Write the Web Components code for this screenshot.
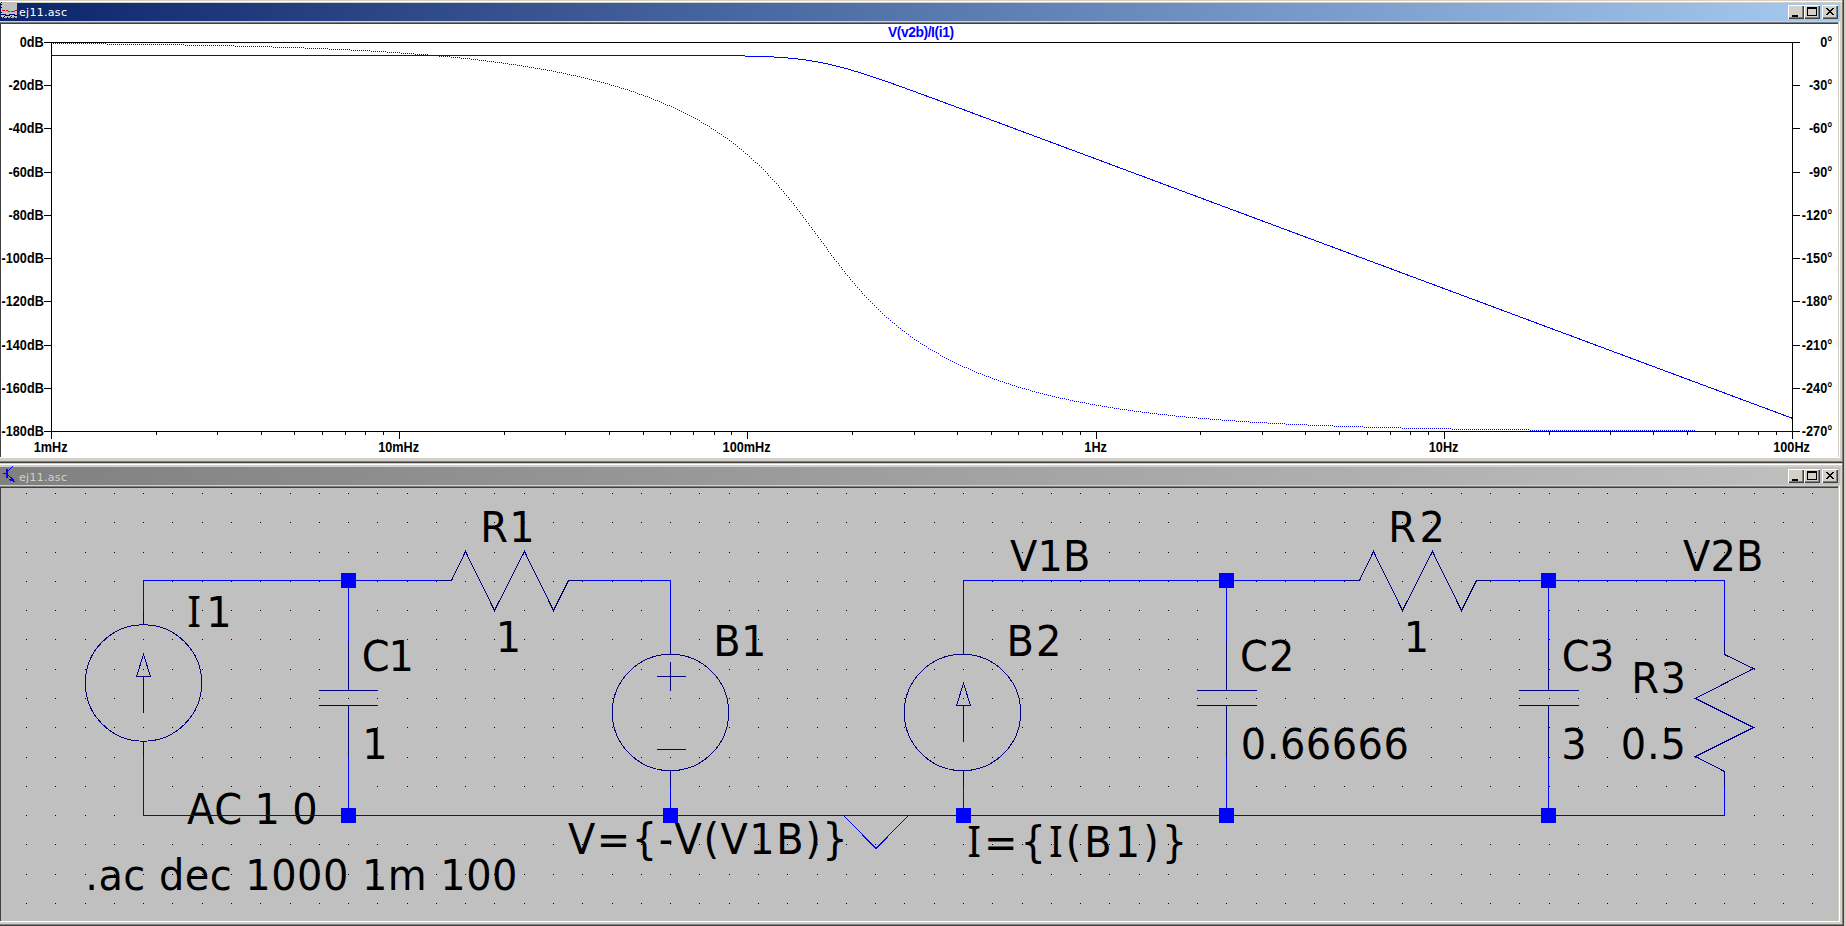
<!DOCTYPE html>
<html lang="en">
<head>
<meta charset="utf-8">
<title>ej11.asc</title>
<style>
html,body{margin:0;height:100%;overflow:hidden;background:#d4d0c8}
</style>
</head>
<body>
<mdi-desktop>
  <mdi-window caption="ej11.asc" active>
    <wave-icon slot="icon"></wave-icon>
    <bode-plot></bode-plot>
  </mdi-window>
  <mdi-window caption="ej11.asc">
    <transistor-icon slot="icon"></transistor-icon>
    <circuit-sheet></circuit-sheet>
  </mdi-window>
</mdi-desktop>
<script>
class MdiDesktop extends HTMLElement {
  constructor() {
    super();
    this.attachShadow({mode: 'open'}).innerHTML = `
      <style>:host{display:flex;flex-direction:column;width:1844px;height:926px;overflow:hidden}</style>
      <slot></slot>`;
  }
}

class WindowButton extends HTMLElement {
  connectedCallback() {
    const glyphs = {
      min: '<path d="M4 10h6v2h-6z"/>',
      max: '<path fill-rule="evenodd" d="M3 2h10v9h-10zM4 4v6h8v-6z"/>',
      close: '<path d="M4 3h2v1h1v1h2v-1h1v-1h2v1h-1v1h-1v1h-1v1h1v1h1v1h1v1h-2v-1h-1v-1h-2v1h-1v1h-2v-1h1v-1h1v-1h1v-1h-1v-1h-1v-1h-1z"/>'
    };
    this.attachShadow({mode: 'open'}).innerHTML = `
      <style>
        :host{display:block;box-sizing:border-box;width:16px;height:14px;background:#d4d0c8;
          box-shadow:inset 1px 1px #fff,inset -1px -1px #404040,inset -2px -2px #808080}
        svg{display:block;shape-rendering:crispEdges}
      </style>
      <svg width="16" height="14">${glyphs[this.getAttribute('kind')]}</svg>`;
  }
}

class MdiWindow extends HTMLElement {
  connectedCallback() {
    const on = this.hasAttribute('active');
    this.attachShadow({mode: 'open'}).innerHTML = `
      <style>
        :host{display:flex;flex-direction:column;flex:none;box-sizing:border-box;width:1844px;
          height:463px;background:#d4d0c8;padding:${on ? 3 : 4}px 4px 0 0;
          box-shadow:inset -1px -1px #404040,inset -2px -2px #808080,inset 0 1px #d4d0c8,inset 0 2px #fff}
        header{display:flex;align-items:center;height:18px;flex:none;
          background:linear-gradient(90deg,${on ? '#0a246a,#a6caf0' : '#808080,#c0c0c0'});
          color:${on ? '#fff' : '#d4d0c8'};font:11px/18px "DejaVu Sans",sans-serif;letter-spacing:.3px}
        ::slotted([slot=icon]){flex:none;width:19px;height:18px}
        .name{flex:1;padding-top:${on ? 2 : 3}px}
        .buttons{display:flex;padding-right:2px}
        window-button[kind=close]{margin-left:2px}
        main{flex:none;box-sizing:border-box;width:1840px;height:437px;
          border-top:1px solid #d4d0c8;border-right:1px solid #fff;border-bottom:1px solid #fff}
        .in{box-sizing:border-box;width:1839px;height:435px;border-top:1px solid #808080;border-right:1px solid #d4d0c8;border-bottom:1px solid #d4d0c8}
        .well{box-sizing:border-box;width:1838px;height:434px;border-top:1px solid #404040;border-left:1px solid #404040}
      </style>
      <header><slot name="icon"></slot><span class="name">${this.getAttribute('caption')}</span>
        <span class="buttons"><window-button kind="min"></window-button><window-button kind="max"></window-button><window-button kind="close"></window-button></span></header>
      <main><div class="in"><div class="well"><slot></slot></div></div></main>`;
  }
}

class WaveIcon extends HTMLElement {
  constructor() {
    super();
    this.attachShadow({mode: 'open'}).innerHTML = `
      <style>:host{display:block}svg{display:block;overflow:visible;shape-rendering:crispEdges}</style>
      <svg width="19" height="18" viewBox="0 3 19 18">
        <path fill="#c0c0c0" d="M1 2h16v16h-16z"/>
        <path fill="#000" d="M1 2h1v1h-1zM1 4h1v1h-1zM1 7h1v1h-1zM1 12h1v1h-1zM1 17h1v1h-1zM4 16h1v1h-1zM3 17h1v1h-1zM7 17h1v1h-1zM11 16h1v1h-1zM10 17h1v1h-1zM14 17h1v1h-1z"/>
        <path fill="#f00" d="M2 10h3v1h-3zM6 10h2v1h-2zM8 11h2v1h-2zM11 11h4v1h-4zM15 10h2v1h-2z"/>
        <path fill="#000080" d="M1 14h5v1h-5zM5 15h5v1h-5zM9 14h6v1h-6zM14 15h3v1h-3z"/>
      </svg>`;
  }
}

class TransistorIcon extends HTMLElement {
  constructor() {
    super();
    this.attachShadow({mode: 'open'}).innerHTML = `
      <style>:host{display:block}svg{display:block;overflow:visible;shape-rendering:crispEdges}</style>
      <svg width="19" height="18" viewBox="0 467 19 18">
        <path fill="#00f" d="M3 473h3v1h-3zM6 469h2v9h-2zM8 470h1v1h-1zM9 469h1v1h-1zM10 468h1v1h-1zM11 467h1v1h-1zM12 466h1v1h-1zM8 475h1v1h-1zM9 476h1v1h-1zM10 477h1v1h-1zM11 477h1v1h1v1h1v2h1v1h-2v-1h-3v-1h-1v-1h2z"/>
      </svg>`;
  }
}

class BodePlot extends HTMLElement {
  connectedCallback() {
    const X0 = 51, X1 = 1792, Y0 = 42, Y1 = 431, DEC = (X1 - X0) / 5, H = Y1 - Y0;
    const omega = x => 2 * Math.PI * 1e-3 * 10 ** ((x - X0) / DEC);
    const gainY = x => Y0 - H / 180 * 20 * Math.log10(.5 / Math.sqrt(1 + omega(x) ** 6));
    const phaseY = x => {
      const w = omega(x);
      return Y0 + H / 270 * (Math.atan(w) + Math.atan2(w, 1 - w * w)) * 180 / Math.PI;
    };
    const text = (x, y, anchor, str) =>
      `<text transform="translate(${x} ${y}) scale(.92 1)" text-anchor="${anchor}">${str}</text>`;
    let axes = `M${X0} ${Y0 + .5}H${X1}M${X0 + .5} ${Y0}V${Y1}M${X1 + .5} ${Y0}V${Y1}M${X0} ${Y1 + .5}H${X1}`;
    let labels = '';
    for (let i = 0; i < 10; i++) {
      const y = Math.round(Y0 + H * i / 9);
      axes += `M44 ${y + .5}H51M1792 ${y + .5}H1800`;
      labels += text(43.8, y + 4.7, 'end', -20 * i + 'dB') + text(1832.3, y + 4.7, 'end', -30 * i + '°');
    }
    ['1mHz', '10mHz', '100mHz', '1Hz', '10Hz', '100Hz'].forEach((name, d) => {
      const x = Math.round(X0 + DEC * d);
      axes += `M${x + .5} 431V439`;
      labels += text(x - .4, 452, 'middle', name);
      for (let k = 2; k < 10 && d < 5; k++)
        axes += `M${Math.round(X0 + DEC * (d + Math.log10(k))) + .5} 431V435`;
    });
    let gain = '', dots = '', n = 0, prev = Math.round(phaseY(X0));
    for (let x = X0; x <= X1; x++) {
      gain += (gain ? 'L' : 'M') + (x + .5) + ' ' + (gainY(x) + .5).toFixed(2);
      const y = Math.round(phaseY(x));
      for (let k = Math.min(prev + 1, y); k <= y; k++)
        if (n++ % 2 === 0) dots += `M${x} ${k}h1v1h-1z`;
      prev = y;
    }
    this.attachShadow({mode: 'open'}).innerHTML = `
      <style>
        :host{display:block;height:433px;background:#fff}
        svg{display:block}
        path{fill:none;shape-rendering:crispEdges}
        text{font:bold 13.8px "Liberation Sans",Arial,sans-serif}
      </style>
      <svg width="1837" height="433" viewBox="1 24 1837 433">
        <path d="${axes}" stroke="#000"/>
        <path d="${gain}" stroke="#00f"/>
        <path d="${dots}" style="fill:#00f"/>
        ${labels}
        <text x="888" y="37" textLength="66" fill="#00f">V(v2b)/I(i1)</text>
      </svg>`;
  }
}

class CircuitSheet extends HTMLElement {
  connectedCallback() {
    let dots = '';
    for (let j = 0; j < 15; j++)
      for (let i = 0; i < 62; i++)
        dots += `M${Math.round(26 + i * 29.28)} ${Math.round(493 + j * 29.29)}h1v1h-1z`;

    const cap = (x, r) => `M${x} 640V690M${x - 29.5} 690H${x + r}M${x - 29.5} 705H${x + r}M${x} 705V756`;
    const arrow = (x, y) => `M${x} ${y}L${x + 7} ${y + 22}H${x - 7}ZM${x} ${y + 22}V${y + 58.5}`;
    const res = x => `M${x} 580H${x + 14}L${x + 28} 551L${x + 57} 610L${x + 87} 551L${x + 116} 610L${x + 131} 580H${x + 145}`;
    const ring = (x, y) => `<circle cx="${x}" cy="${y}" r="58.2"/>`;
    const node = (x, y) => `<rect x="${x - 7}" y="${y - 7}" width="15" height="15"/>`;

    // Labels are placed by the edges of their ink; the spacing takes up the difference.
    const size = 42.5, squeeze = .94;
    const pen = document.createElement('canvas').getContext('2d');
    const fontOf = c => c === 'I' ? '43.4px "Noto Sans"' : size + 'px "DejaVu Sans"';
    const label = (str, left, right, base) => {
      const chars = [...str];
      const m = chars.map(c => { pen.font = fontOf(c); return pen.measureText(c); });
      const lead = -m[0].actualBoundingBoxLeft;
      const last = m[m.length - 1];
      const ink = m.slice(0, -1).reduce((s, v) => s + v.width, 0) + last.actualBoundingBoxRight - lead;
      const gap = chars.length > 1 ? ((right - left) / squeeze - ink) / (chars.length - 1) : 0;
      const body = str.replace(/I/g, '<tspan class="i">I</tspan>');
      return `<text transform="translate(${left} ${base}) scale(${squeeze} 1)" x="${(-lead).toFixed(2)}" letter-spacing="${gap.toFixed(3)}">${body}</text>`;
    };
    const labels = [
      ['R1', 484, 531.7, 542], ['1', 499.5, 516.5, 652], ['I1', 188.3, 228.7, 627],
      ['C1', 363.6, 411, 671], ['1', 366, 383, 759], ['AC 1 0', 187, 315.7, 824],
      ['.ac dec 1000 1m 100', 89, 515.6, 890], ['B1', 717, 763.6, 656],
      ['V={-V(V1B)}', 568, 843, 854], ['V1B', 1010, 1088.5, 571], ['B2', 1010.2, 1057.5, 656],
      ['I={I(B1)}', 968.2, 1182.5, 857], ['C2', 1242, 1290.7, 671], ['0.66666', 1242.7, 1407, 759],
      ['R2', 1392, 1441, 542], ['1', 1407.5, 1424, 652], ['V2B', 1683, 1761.5, 571],
      ['C3', 1563.6, 1611.5, 671], ['R3', 1635, 1683, 693], ['3', 1564, 1584, 759],
      ['0.5', 1622.7, 1683, 759]
    ].map(a => label(...a)).join('');

    this.attachShadow({mode: 'open'}).innerHTML = `
      <style>
        :host{display:block;height:433px;background:#c0c0c0}
        svg{display:block}
        .lines{fill:none;shape-rendering:crispEdges;stroke-width:1}
        .px{shape-rendering:crispEdges}
        text{font:42.5px "DejaVu Sans",sans-serif;font-kerning:none;font-variant-ligatures:none;white-space:pre}
        .i{font:43.4px "Noto Sans",sans-serif}
      </style>
      <svg width="1837" height="433" viewBox="1 488 1837 433">
        <path class="px" d="${dots}"/>
        ${labels}
        <g class="lines" transform="translate(.5 .5)">
          <g stroke="#000080">
            <path d="M143 610V624M143 741V756${arrow(143, 654)}${cap(348, 29.5)}${cap(1226, 30.5)}${cap(1548, 30.5)}${res(437)}${res(1345)}
              M670 640V654M670 770V785M656 676H685.5M670 661V690.5M656 749H685.5
              M963 640V654M963 770V785${arrow(963, 683)}
              M1724 640V654L1753 668L1695 698L1753 727L1695 756L1724 771V785"/>
            ${ring(143, 682.5)}${ring(670, 712)}${ring(962, 712)}
          </g>
          <g stroke="#00f">
            <path d="M143 610V580H437M348 580V640M348 756V815M143 756V815H1724V785M582 580H670V640M670 785V815
              M843 815L875.5 848L908 815M963 785V815M963 640V580H1345M1226 580V640M1226 756V815
              M1490 580H1724V640M1548 580V640M1548 756V815"/>
          </g>
        </g>
        <g class="px" fill="#00f">
          ${node(348, 580)}${node(1226, 580)}${node(1548, 580)}
          ${[348, 670, 963, 1226, 1548].map(x => node(x, 815)).join('')}
        </g>
      </svg>`;
  }
}

customElements.define('window-button', WindowButton);
customElements.define('wave-icon', WaveIcon);
customElements.define('transistor-icon', TransistorIcon);
customElements.define('bode-plot', BodePlot);
customElements.define('circuit-sheet', CircuitSheet);
customElements.define('mdi-window', MdiWindow);
customElements.define('mdi-desktop', MdiDesktop);
</script>
</body>
</html>
